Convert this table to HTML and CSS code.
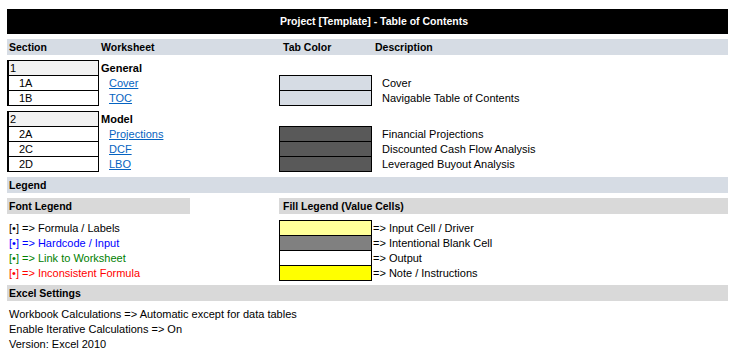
FILE: index.html
```html
<!DOCTYPE html>
<html lang="en">
<head>
<meta charset="utf-8">
<title>Project [Template] - Table of Contents</title>
<link rel="stylesheet" href="styles.css">
</head>
<body>
<main class="sheet">
  <header class="title">Project [Template] - Table of Contents</header>

  <div class="bar bar-blue cols">
    <span class="h-a">Section</span>
    <span class="h-b">Worksheet</span>
    <span class="h-c">Tab Color</span>
    <span class="h-d">Description</span>
  </div>

  <section class="group">
    <div class="row">
      <div class="cell sec sec-head">1</div>
      <div class="cell ws"><b>General</b></div>
      <div class="cell"></div>
      <div class="cell"></div>
    </div>
    <div class="row">
      <div class="cell sec sub">1A</div>
      <div class="cell ws link-cell"><a href="#">Cover</a></div>
      <div class="cell tab tab-light"></div>
      <div class="cell desc">Cover</div>
    </div>
    <div class="row">
      <div class="cell sec sub">1B</div>
      <div class="cell ws link-cell"><a href="#">TOC</a></div>
      <div class="cell tab tab-light"></div>
      <div class="cell desc">Navigable Table of Contents</div>
    </div>
  </section>

  <section class="group">
    <div class="row">
      <div class="cell sec sec-head">2</div>
      <div class="cell ws"><b>Model</b></div>
      <div class="cell"></div>
      <div class="cell"></div>
    </div>
    <div class="row">
      <div class="cell sec sub">2A</div>
      <div class="cell ws link-cell"><a href="#">Projections</a></div>
      <div class="cell tab tab-dark"></div>
      <div class="cell desc">Financial Projections</div>
    </div>
    <div class="row">
      <div class="cell sec sub">2C</div>
      <div class="cell ws link-cell"><a href="#">DCF</a></div>
      <div class="cell tab tab-dark"></div>
      <div class="cell desc">Discounted Cash Flow Analysis</div>
    </div>
    <div class="row">
      <div class="cell sec sub">2D</div>
      <div class="cell ws link-cell"><a href="#">LBO</a></div>
      <div class="cell tab tab-dark"></div>
      <div class="cell desc">Leveraged Buyout Analysis</div>
    </div>
  </section>

  <div class="bar bar-blue legend-bar">Legend</div>

  <div class="legend-heads">
    <div class="bar bar-gray">Font Legend</div>
    <div class="bar bar-gray fill-head">Fill Legend (Value Cells)</div>
  </div>

  <section class="legend">
    <div class="lrow">
      <div class="cell font-item">[•] =&gt; Formula / Labels</div>
      <div class="cell swatch sw-input"></div>
      <div class="cell fill-item">=&gt; Input Cell / Driver</div>
    </div>
    <div class="lrow">
      <div class="cell font-item c-blue">[•] =&gt; Hardcode / Input</div>
      <div class="cell swatch sw-blank"></div>
      <div class="cell fill-item">=&gt; Intentional Blank Cell</div>
    </div>
    <div class="lrow">
      <div class="cell font-item c-green">[•] =&gt; Link to Worksheet</div>
      <div class="cell swatch sw-output"></div>
      <div class="cell fill-item">=&gt; Output</div>
    </div>
    <div class="lrow">
      <div class="cell font-item c-red">[•] =&gt; Inconsistent Formula</div>
      <div class="cell swatch sw-note"></div>
      <div class="cell fill-item">=&gt; Note / Instructions</div>
    </div>
  </section>

  <div class="bar bar-gray settings-bar">Excel Settings</div>

  <section class="settings">
    <p>Workbook Calculations =&gt; Automatic except for data tables</p>
    <p>Enable Iterative Calculations =&gt; On</p>
    <p>Version: Excel 2010</p>
  </section>
</main>
</body>
</html>
```

FILE: styles.css
```css
* {
  box-sizing: border-box;
}

body {
  margin: 0;
  background: #ffffff;
  color: #000000;
  font-family: "Liberation Sans", Arial, sans-serif;
  font-size: 11px;
}

.sheet {
  width: 721px;
  margin: 9px 0 0 7px;
}

.title {
  height: 25px;
  line-height: 25px;
  background: #000000;
  color: #ffffff;
  font-weight: bold;
  font-size: 10.5px;
  text-align: center;
  padding-left: 13px;
}

.bar {
  height: 16px;
  line-height: 16px;
  font-weight: bold;
  font-size: 10.5px;
  padding-left: 2px;
  white-space: nowrap;
}

.bar-blue {
  background: #d6dce4;
}

.bar-gray {
  background: #d9d9d9;
}

.cols {
  margin-top: 5px;
  display: grid;
  grid-template-columns: 92px 180px 93px 1fr;
  padding-left: 0;
}

.h-a { padding-left: 2px; }
.h-b { padding-left: 2px; }
.h-c { padding-left: 4px; }
.h-d { padding-left: 3px; }

/* section groups */
.group {
  margin-top: 5px;
}

.row {
  display: grid;
  grid-template-columns: 92px 180px 93px 1fr;
  height: 15px;
}

.row:last-child {
  height: 16px;
}

.cell {
  border-top: 1px solid transparent;
  line-height: 14px;
  white-space: nowrap;
}

.sec {
  border-style: solid;
  border-color: #000000;
  border-width: 1px 1px 0 2px;
  padding-left: 1px;
}

.row:last-child .sec,
.row:last-child .tab {
  border-bottom-width: 1px;
}

.sec-head {
  background: #f2f2f2;
}

.sub {
  padding-left: 10px;
}

.ws {
  padding-left: 2px;
}

.link-cell {
  padding-left: 10px;
}

.link-cell a {
  color: #0563c1;
  text-decoration: underline;
}

.tab {
  border-style: solid;
  border-color: #000000;
  border-width: 1px 1px 0 1px;
}

.tab-light {
  background: #d6dce4;
}

.tab-dark {
  background: #595959;
}

.desc {
  padding-left: 10px;
}

/* legend */
.legend-bar {
  margin-top: 5px;
}

.legend-heads {
  margin-top: 5px;
  display: grid;
  grid-template-columns: 183px 1fr;
  column-gap: 89px;
}

.fill-head {
  padding-left: 4px;
}

.legend {
  margin-top: 6px;
}

.lrow {
  display: grid;
  grid-template-columns: 272px 93px 1fr;
  height: 15px;
}

.lrow:last-child {
  height: 16px;
}

.font-item {
  padding-left: 2px;
}

.c-blue { color: #0000ff; }
.c-green { color: #008000; }
.c-red { color: #ff0000; }

.swatch {
  border-style: solid;
  border-color: #000000;
  border-width: 1px 1px 0 1px;
}

.lrow:last-child .swatch {
  border-bottom-width: 1px;
}

.sw-input { background: #ffff99; }
.sw-blank { background: #808080; }
.sw-output { background: #ffffff; }
.sw-note { background: #ffff00; }

.fill-item {
  padding-left: 1px;
}

/* settings */
.settings-bar {
  margin-top: 4px;
}

.settings {
  margin-top: 6px;
}

.settings p {
  margin: 0;
  height: 15px;
  line-height: 15px;
  padding-left: 2px;
  white-space: nowrap;
}
```
